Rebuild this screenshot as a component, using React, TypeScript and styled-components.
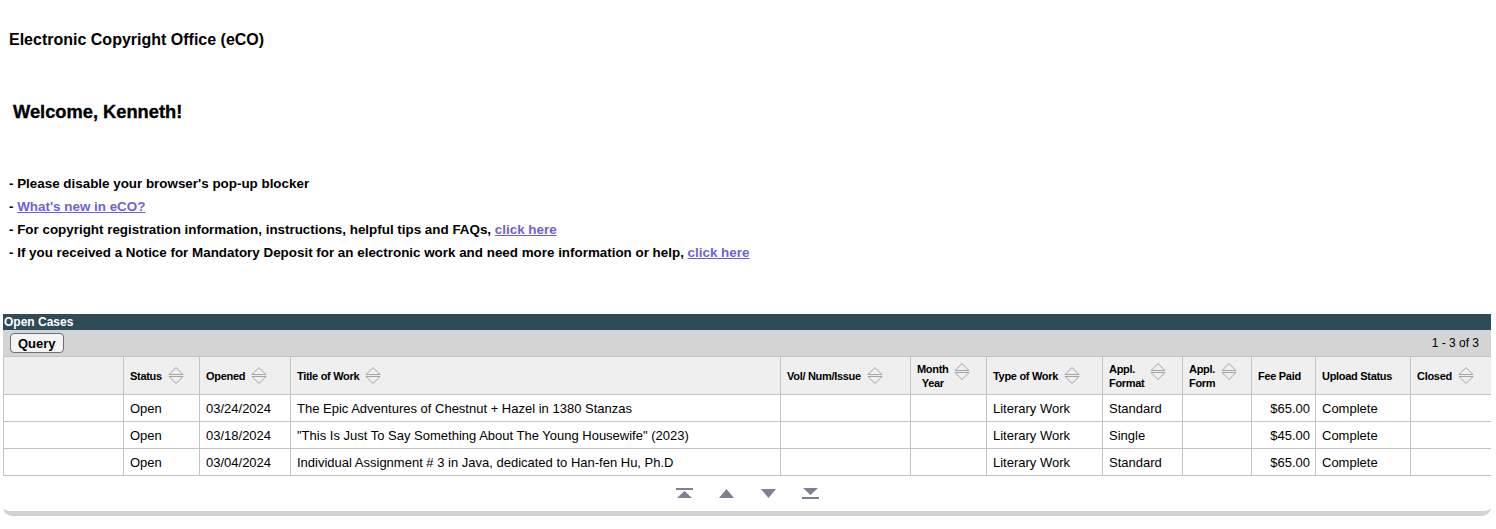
import React from 'react'
import styled, { createGlobalStyle } from 'styled-components'

const GlobalStyle = createGlobalStyle`
  body {
    margin: 0;
    background: #fff;
    font-family: "Liberation Sans", Arial, sans-serif;
    color: #000;
  }
`

const Page = styled.div`
  padding: 31px 5px 0 3px;
`

const Title = styled.h1`
  margin: 0 0 0 6px;
  font-size: 16px;
  line-height: 18px;
  font-weight: bold;
`

const Welcome = styled.h2`
  margin: 52px 0 0 10px;
  font-size: 18.3px;
  line-height: 22px;
  font-weight: bold;
  -webkit-text-stroke: 0.35px #000;
`

const Notes = styled.ul`
  list-style: none;
  margin: 49px 0 0 6px;
  padding: 0;
`

const Note = styled.li`
  font-size: 13.4px;
  line-height: 23px;
  font-weight: bold;
`

const Link = styled.a`
  color: #6f62d6;
  text-decoration: underline;
`

const Panel = styled.div`
  margin-top: 50px;
  border-bottom: 5px solid #d3d3d3;
  border-radius: 0 0 9px 9px;
  overflow: hidden;
`

const PanelTitle = styled.div`
  background: #304b58;
  color: #fff;
  font-size: 12px;
  font-weight: bold;
  line-height: 16px;
  padding-left: 1px;
`

const Toolbar = styled.div`
  display: flex;
  align-items: center;
  justify-content: space-between;
  background: #d4d4d4;
  height: 26px;
  padding: 0 12px 0 7px;
`

const QueryButton = styled.button`
  font-family: inherit;
  font-size: 13px;
  font-weight: bold;
  height: 20px;
  padding: 0 7px;
  background: #f4f4f4;
  border: 1px solid #6e6e6e;
  border-radius: 4px;
  color: #000;
`

const Count = styled.span`
  font-size: 12px;
`

const Table = styled.table`
  width: 1488px;
  border-collapse: collapse;
  table-layout: fixed;
`

const HeadCell = styled.th`
  background: #efefef;
  border: 1px solid #c3c3c3;
  height: 37px;
  padding: 0 6px;
  text-align: left;
  font-size: 11px;
  letter-spacing: -0.3px;
  font-weight: bold;
  line-height: 14px;
  vertical-align: middle;
`

const HeadInner = styled.div<{ $top?: boolean }>`
  display: flex;
  align-items: ${p => (p.$top ? 'flex-start' : 'center')};
  gap: 6px;
`

const HeadLabel = styled.span<{ $center?: boolean }>`
  text-align: ${p => (p.$center ? 'center' : 'left')};
`

const Cell = styled.td<{ $right?: boolean }>`
  border: 1px solid #c3c3c3;
  height: 26px;
  padding: 0 5px 0 6px;
  font-size: 13px;
  text-align: ${p => (p.$right ? 'right' : 'left')};
  white-space: nowrap;
  overflow: hidden;
`

const Pager = styled.div`
  display: flex;
  justify-content: center;
  align-items: center;
  gap: 25px;
  height: 35px;
  background: #fff;
`

const SortIcon = () => (
  <svg width="16" height="19" viewBox="0 0 16 19" style={{ flexShrink: 0 }}>
    <g fill="none" stroke="#a4a4a4" strokeWidth="1">
      <path d="M1 8.5 L8 1.5 L15 8.5 Z" />
      <path d="M1 10.5 L8 17.5 L15 10.5 Z" />
    </g>
  </svg>
)

const NavIcon = ({ kind }: { kind: 'first' | 'prev' | 'next' | 'last' }) => (
  <svg width="17" height="11" viewBox="0 0 17 11">
    <g fill="#7f8090">
      {kind === 'first' && (
        <>
          <rect x="0" y="0" width="17" height="2" />
          <path d="M8.5 3 L16 10 L1 10 Z" />
        </>
      )}
      {kind === 'prev' && <path d="M8.5 1 L16 10 L1 10 Z" />}
      {kind === 'next' && <path d="M1 1 L16 1 L8.5 10 Z" />}
      {kind === 'last' && (
        <>
          <path d="M1 0 L16 0 L8.5 7 Z" />
          <rect x="0" y="9" width="17" height="2" />
        </>
      )}
    </g>
  </svg>
)

type Col = { label: React.ReactNode; width: number; sort: boolean; two?: boolean; center?: boolean }

const columns: Col[] = [
  { label: '', width: 120, sort: false },
  { label: 'Status', width: 76, sort: true },
  { label: 'Opened', width: 91, sort: true },
  { label: 'Title of Work', width: 490, sort: true },
  { label: 'Vol/ Num/Issue', width: 130, sort: true },
  { label: <>Month<br />Year</>, width: 76, sort: true, two: true, center: true },
  { label: 'Type of Work', width: 116, sort: true },
  { label: <>Appl.<br />Format</>, width: 80, sort: true, two: true },
  { label: <>Appl.<br />Form</>, width: 69, sort: true, two: true },
  { label: 'Fee Paid', width: 64, sort: false },
  { label: 'Upload Status', width: 95, sort: false },
  { label: 'Closed', width: 81, sort: true },
]

const cases = [
  { opened: '03/24/2024', title: 'The Epic Adventures of Chestnut + Hazel in 1380 Stanzas', format: 'Standard', fee: '$65.00' },
  { opened: '03/18/2024', title: '"This Is Just To Say Something About The Young Housewife" (2023)', format: 'Single', fee: '$45.00' },
  { opened: '03/04/2024', title: 'Individual Assignment # 3 in Java, dedicated to Han-fen Hu, Ph.D', format: 'Standard', fee: '$65.00' },
]

export default function App() {
  return (
    <>
      <GlobalStyle />
      <Page>
        <Title>Electronic Copyright Office (eCO)</Title>
        <Welcome>Welcome, Kenneth!</Welcome>
        <Notes>
          <Note>- Please disable your browser's pop-up blocker</Note>
          <Note>- <Link href="#">What's new in eCO?</Link></Note>
          <Note>
            - For copyright registration information, instructions, helpful tips and FAQs, <Link href="#">click here</Link>
          </Note>
          <Note>
            - If you received a Notice for Mandatory Deposit for an electronic work and need more information or help,{' '}
            <Link href="#">click here</Link>
          </Note>
        </Notes>

        <Panel>
          <PanelTitle>Open Cases</PanelTitle>
          <Toolbar>
            <QueryButton>Query</QueryButton>
            <Count>1 - 3 of 3</Count>
          </Toolbar>
          <Table>
            <colgroup>
              {columns.map((c, i) => <col key={i} style={{ width: c.width }} />)}
            </colgroup>
            <thead>
              <tr>
                {columns.map((c, i) => (
                  <HeadCell key={i}>
                    <HeadInner $top={c.two}>
                      <HeadLabel $center={c.center}>{c.label}</HeadLabel>
                      {c.sort && <SortIcon />}
                    </HeadInner>
                  </HeadCell>
                ))}
              </tr>
            </thead>
            <tbody>
              {cases.map(r => (
                <tr key={r.opened}>
                  <Cell />
                  <Cell>Open</Cell>
                  <Cell>{r.opened}</Cell>
                  <Cell>{r.title}</Cell>
                  <Cell />
                  <Cell />
                  <Cell>Literary Work</Cell>
                  <Cell>{r.format}</Cell>
                  <Cell />
                  <Cell $right>{r.fee}</Cell>
                  <Cell>Complete</Cell>
                  <Cell />
                </tr>
              ))}
            </tbody>
          </Table>
          <Pager>
            <NavIcon kind="first" />
            <NavIcon kind="prev" />
            <NavIcon kind="next" />
            <NavIcon kind="last" />
          </Pager>
        </Panel>
      </Page>
    </>
  )
}
